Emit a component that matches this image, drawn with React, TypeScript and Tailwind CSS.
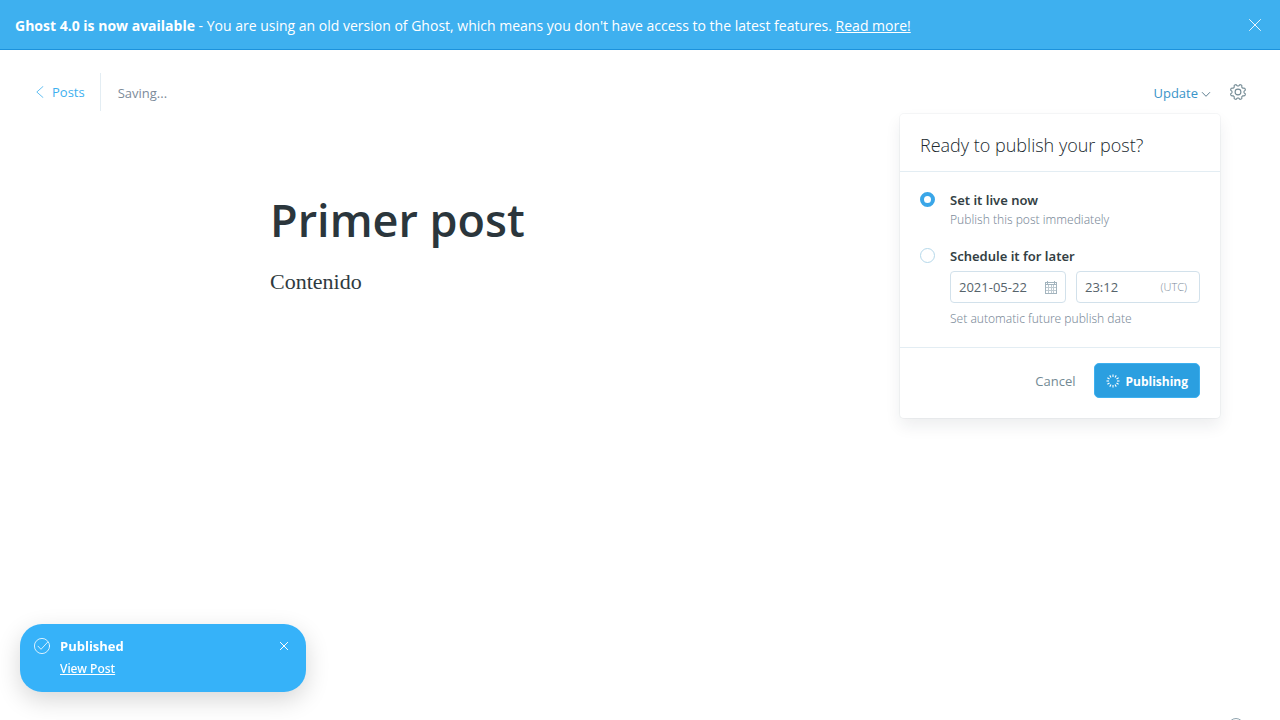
import { useState } from 'react';

function CloseIcon({ className }: { className: string }) {
  return (
    <svg viewBox="0 0 12 12" className={className} fill="none" stroke="currentColor" strokeLinecap="round" aria-hidden="true">
      <path d="M.5.5l11 11M11.5.5l-11 11" vectorEffect="non-scaling-stroke" />
    </svg>
  );
}

function GearIcon() {
  const points = Array.from({ length: 96 }, (_, i) => {
    const angle = (i / 96) * Math.PI * 2;
    const wave = Math.max(-0.9, Math.min(0.8, Math.cos(angle * 8 + Math.PI) * 1.4));
    const radius = 6.9 + wave;
    return `${(8 + radius * Math.sin(angle)).toFixed(2)},${(8 - radius * Math.cos(angle)).toFixed(2)}`;
  }).join(' ');
  return (
    <svg viewBox="0 0 16 16" className="size-4 overflow-visible" fill="none" stroke="currentColor" strokeWidth="1.1" strokeLinejoin="round" aria-hidden="true">
      <circle cx="8" cy="8" r="2.9" />
      <polygon points={points} />
    </svg>
  );
}

function CalendarIcon() {
  return (
    <svg viewBox="0 0 12 13" className="h-[13px] w-3" fill="none" stroke="currentColor" shapeRendering="crispEdges" aria-hidden="true">
      <path d="M.5 1.5h11v11H.5zM0 3.500h12M2.500 0v3M9.500 0v3" />
      <path d="M0 6.500h12M0 9.500h12M3.500 4v9M6.500 4v9M8.500 4v9" strokeOpacity=".7" />
    </svg>
  );
}

function SpinnerIcon() {
  return (
    <svg viewBox="0 0 14 14" className="size-3.5" fill="none" stroke="currentColor" strokeWidth="1.1" aria-hidden="true">
      {[0, 30, 60, 90, 120, 150, 180, 210, 240, 270, 300, 330].map((angle) => (
        <path key={angle} d="M7 .5v2.500" transform={`rotate(${angle} 7 7)`} />
      ))}
    </svg>
  );
}

const radioClass =
  'mt-px size-[15px] shrink-0 appearance-none rounded-full border border-[#b5d8ea] bg-white checked:border-4 checked:border-[#3aa6e8]';

const labelClass = "block font-['Noto_Sans',sans-serif] text-[13px] leading-[18px] font-semibold text-[#343f44]";

const hintClass = "font-['Noto_Sans',sans-serif] text-[12px] leading-[20px] font-light text-[#7c8b9a]";

const fieldClass = 'w-0 min-w-0 flex-1 pt-0.5 text-[13px] text-[#56636b] outline-none';

function PublishMenu() {
  const [mode, setMode] = useState('now');
  return (
    <form className="w-80 rounded bg-white shadow-[0_0_0_1px_rgba(99,114,130,0.06),0_8px_16px_rgba(27,39,51,0.08)]">
      <h2 className="border-b border-[#e3edf3] px-5 pt-[17px] pb-[11px] text-[18px] leading-[29px] font-light text-[#20292e]">
        Ready to publish your post?
      </h2>
      <fieldset className="flex flex-col gap-[17px] border-b border-[#e3edf3] px-5 pt-[19px] pb-[18px]">
        <div className="flex gap-[15px]">
          <input id="live" type="radio" name="mode" checked={mode === 'now'} onChange={() => setMode('now')} className={radioClass} />
          <div>
            <label htmlFor="live" className={labelClass}>Set it live now</label>
            <p className={`mt-px ${hintClass}`}>Publish this post immediately</p>
          </div>
        </div>
        <div className="flex gap-[15px]">
          <input id="later" type="radio" name="mode" checked={mode === 'later'} onChange={() => setMode('later')} className={radioClass} />
          <div className="min-w-0 flex-1">
            <label htmlFor="later" className={labelClass}>Schedule it for later</label>
            <div className="mt-1.5 flex gap-2.5">
              <div className="flex h-8 w-[116px] items-center rounded border border-[#d2e1eb] px-2 text-[#a3b4be]">
                <input aria-label="Publish date" defaultValue="2021-05-22" className={fieldClass} />
                <CalendarIcon />
              </div>
              <div className="flex h-8 min-w-0 flex-1 items-center rounded border border-[#d2e1eb] pr-3 pl-2">
                <input id="time" aria-label="Publish time" defaultValue="23:12" className={fieldClass} />
                <label htmlFor="time" className="text-[11px] font-light text-[#7c8b9a]">(UTC)</label>
              </div>
            </div>
            <p className={`mt-1.5 ${hintClass}`}>Set automatic future publish date</p>
          </div>
        </div>
      </fieldset>
      <div className="flex items-center justify-end gap-[19px] px-5 pt-[15px] pb-5">
        <button type="button" className="pt-0.5 text-[13px] text-[#738a94]">Cancel</button>
        <button type="button" className="flex h-[35px] items-center gap-[5px] rounded-[5px] border border-[#3eb0ef] bg-[#2b9fe0] px-[11px] text-[12px] font-bold text-white">
          <SpinnerIcon />
          <span className="pt-0.5">Publishing</span>
        </button>
      </div>
    </form>
  );
}

export default function App() {
  return (
    <div className="min-h-screen bg-white font-['Open_Sans','Noto_Sans',sans-serif]">
      <aside className="flex h-[50px] items-center justify-between border-b border-[#1c92dc] bg-[#3eb0ef] px-[15px] text-[14px] text-white">
        <p className="pt-0.5">
          <strong className="font-bold">Ghost 4.0 is now available</strong> - You are using an old version of Ghost, which means you don't have access to the latest features.{' '}
          <a href="#upgrade" className="underline">Read more!</a>
        </p>
        <button type="button" aria-label="Close banner" className="mr-1">
          <CloseIcon className="size-3 overflow-visible opacity-90" />
        </button>
      </aside>

      <header className="flex h-[84px] items-center justify-between pr-[34px] pl-9">
        <div className="flex items-center">
          <a href="#posts" className="flex h-[38px] items-center gap-2 border-r border-[#e3edf3] pr-[15px] text-[13px] text-[#3eb0ef]">
            <svg viewBox="0 0 8 12" className="h-3 w-2" fill="none" stroke="currentColor" strokeLinecap="round" strokeOpacity=".8" aria-hidden="true">
              <path d="M7 .5L.8 6 7 11.500" />
            </svg>
            <span className="pt-0.5">Posts</span>
          </a>
          <p className="pt-1 pl-[17px] text-[13px] text-[#7c8b9a]">Saving...</p>
        </div>
        <div className="flex items-center gap-5">
          <button type="button" className="flex items-center gap-1 pt-1 text-[13px] text-[#3a94c9]">
            Update
            <svg viewBox="0 0 8 5" className="h-[5px] w-2 overflow-visible" fill="none" stroke="#5f7f92" strokeLinecap="round" aria-hidden="true">
              <path d="M.3.5L4 4.300 7.700.5" />
            </svg>
          </button>
          <button type="button" aria-label="Settings" className="text-[#738a94]">
            <GearIcon />
          </button>
        </div>
      </header>
      <div className="relative mr-[60px]">
        <div className="absolute -top-5 right-0 z-10">
          <PublishMenu />
        </div>
      </div>

      <main className="mx-auto max-w-[740px] pt-14">
        <h1 className="text-[45px] leading-[60px] font-semibold text-[#2b363c]">Primer post</h1>
        <p className="mt-[18px] font-['Liberation_Serif',serif] text-[22px] leading-[28px] text-[#2f3a40]">Contenido</p>
      </main>

      <div role="status" className="fixed bottom-7 left-5 flex h-[68px] w-[286px] items-start rounded-[22px] bg-[#36b2f9] px-3.5 pt-3 text-[13px] text-white shadow-[0_8px_24px_rgba(0,0,0,0.16)]">
        <svg viewBox="0 0 16 16" className="mt-0.5 size-4" fill="none" stroke="currentColor" strokeWidth=".8" strokeLinecap="round" strokeLinejoin="round" aria-hidden="true">
          <circle cx="8" cy="8" r="7.600" />
          <path d="M4 8.200l3 3.100 6.600-7.100" />
        </svg>
        <div className="ml-2.5 flex-1">
          <p className="leading-[20px] font-bold">Published</p>
          <a href="#post" className="block pt-[3px] font-['Noto_Sans',sans-serif] text-[12px] leading-[20px] font-medium underline">View Post</a>
        </div>
        <button type="button" aria-label="Dismiss" className="mt-1.5 mr-1">
          <CloseIcon className="size-2 overflow-visible" />
        </button>
      </div>

      <button type="button" aria-label="Help" className="fixed right-9 -bottom-3.5 size-4 rounded-full border border-[#8fa3ae]" />
    </div>
  );
}
